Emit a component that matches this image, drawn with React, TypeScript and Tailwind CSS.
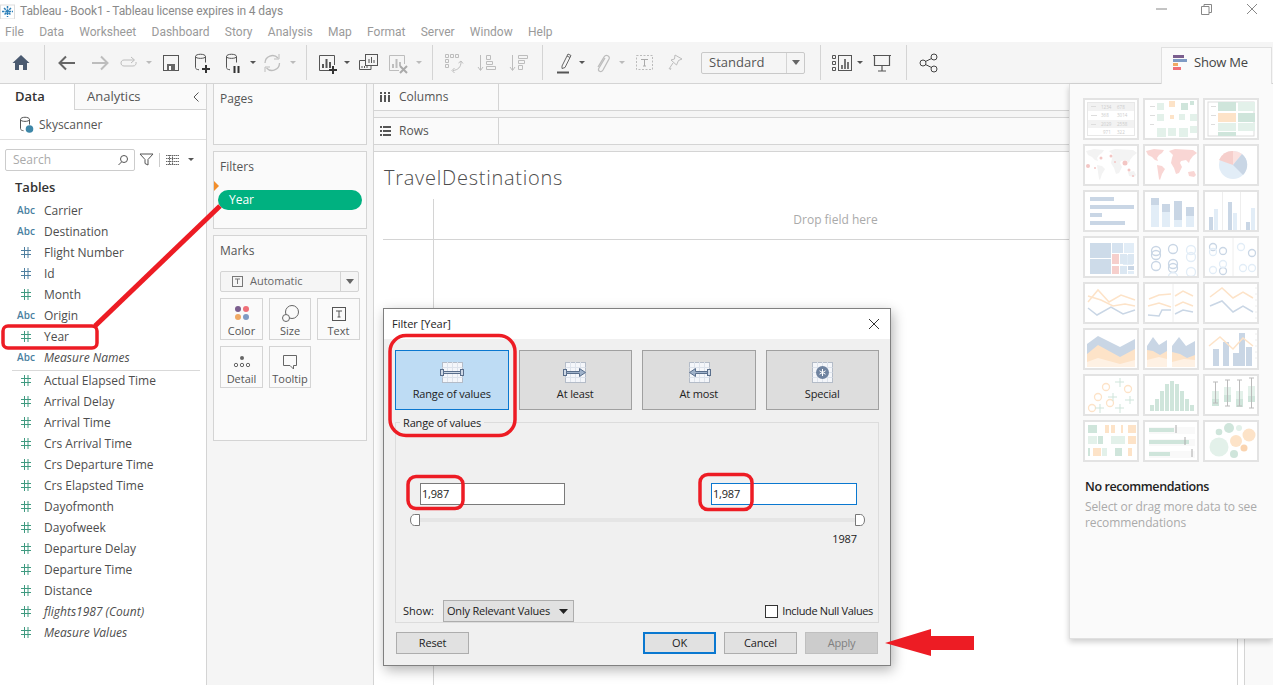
import React from "react";

const dark = "#555";
const off = "#bdbdbd";

function Icon({ children, className = "" }: { children: React.ReactNode; className?: string }) {
  return (
    <svg width="24" height="24" viewBox="0 0 24 24" fill="none" strokeWidth="1" className={"shrink-0 " + className}>
      {children}
    </svg>
  );
}

function Caret({ className = "", light = false }: { className?: string; light?: boolean }) {
  return (
    <svg width="8" height="5" viewBox="0 0 8 5" className={"shrink-0 " + className}>
      <path d="M1 1h6L4 4z" fill={light ? "#bbb" : "#555"} />
    </svg>
  );
}

function Sep({ className = "" }: { className?: string }) {
  return <div className={"h-[35px] w-px shrink-0 bg-[#d4d4d4] " + className} />;
}

function Cylinder({ color = dark }: { color?: string }) {
  return (
    <path d="M5.500 5.500c0-3 10-3 10 0v6M5.500 5.500c0 2.500 10 2.500 10 0M5.500 5.500v11c0 1.500 1.500 2 3.500 2.300" stroke={color} fill="none" />
  );
}

function Toolbar() {
  return (
    <div className="flex h-[41px] shrink-0 items-center bg-[#f5f5f5] border-b border-[#d4d4d4] box-content">
      <Icon className="ml-[9px]">
        <path d="M12 4 L20.500 12 H18 V19 H14 V14 H10 V19 H6 V12 H3.500 Z" fill="#4a5a70" />
      </Icon>
      <Sep className="ml-[11px]" />
      <Icon className="ml-[10px]">
        <path d="M20 12H5M11 5.500 4.500 12l6.500 6.500" stroke="#666" strokeWidth="2" />
      </Icon>
      <Icon className="ml-[9px]">
        <path d="M4 12h15M13 5.500l6.500 6.500-6.500 6.500" stroke={off} strokeWidth="2" />
      </Icon>
      <Icon className="ml-[5px]">
        <path d="M17 9H7c-4 0-4 6 0 6h9c2.500 0 3.500-2 3-4" stroke={off} />
        <path d="M14 6l3.500 3-3.500 3" stroke={off} />
      </Icon>
      <Caret light className="ml-[4px]" />
      <Icon className="ml-[6px]">
        <rect x="4.500" y="4.500" width="15" height="15" stroke={dark} />
        <rect x="8" y="13" width="8" height="6.500" fill="#666" />
        <rect x="10" y="15" width="2" height="4" fill="#fff" />
      </Icon>
      <Icon className="ml-[7px]">
        <Cylinder />
        <path d="M12 18h8M16 14v8" stroke="#333" strokeWidth="2" />
      </Icon>
      <Icon className="ml-[7px]">
        <Cylinder />
        <path d="M13.500 15v7M17.500 15v7" stroke="#333" strokeWidth="2" />
      </Icon>
      <Caret className="ml-[4px]" />
      <Icon className="ml-[3px]">
        <path d="M5 12a7.500 7.500 0 0 1 13-5M19.500 12a7.500 7.500 0 0 1-13 5" stroke={off} strokeWidth="1.300" />
        <path d="M19 3v5h-5M5 21v-5h5" stroke={off} />
      </Icon>
      <Caret light className="ml-[5px]" />
      <Sep className="ml-[9px]" />
      <Icon className="ml-[8px]">
        <path d="M14 19.500H4.500v-15h15V14" stroke={dark} />
        <path d="M8 17v-4M11.500 17V8M15 17v-6" stroke={dark} strokeWidth="2" />
        <path d="M14 19h8M18 15v8" stroke="#333" strokeWidth="2" />
      </Icon>
      <Caret className="ml-[4px]" />
      <Icon className="ml-[5px]">
        <rect x="9.500" y="3.500" width="12" height="11" fill="#f5f5f5" stroke={dark} />
        <path d="M13 12V8M15.500 12V6M18 12V9" stroke={dark} />
        <path d="M9 9.500H3.500v9H15v-4" stroke={dark} />
        <path d="M6 17v-2M8.500 17v-2M11 17v-2" stroke={dark} />
      </Icon>
      <Icon className="ml-[5px]">
        <path d="M14 19.500H4.500v-15h15V13" stroke={off} />
        <path d="M8 17v-4M11.500 17V8M15 15v-4" stroke={off} strokeWidth="2" />
        <path d="M15 15l7 7M22 15l-7 7" stroke="#aaa" strokeWidth="2" />
      </Icon>
      <Caret light className="ml-[6px]" />
      <Sep className="ml-[9px]" />
      <Icon className="ml-[8px]">
        <path d="M4.500 3.500h3v3h-3zM9.500 3.500h3v3h-3zM14.500 3.500h3v3h-3zM4.500 8.500h3v3h-3zM4.500 13.500h3v3h-3z" stroke={off} />
        <path d="M20 11c0 5-3 8-8 8.500M13.500 17l-2.500 2.500 2.500 2.500M17.500 12l2.500-2 2 2.500" stroke={off} />
      </Icon>
      <Icon className="ml-[10px]">
        <path d="M5.500 4v15M3 16l2.500 3.500L8 16" stroke={off} />
        <path d="M11.500 4.500h4v4h-4zM11.500 10.500h6v3h-6zM11.500 15.500h9v3h-9z" stroke={off} />
      </Icon>
      <Icon className="ml-[8px]">
        <path d="M5.500 4v15M3 16l2.500 3.500L8 16" stroke={off} />
        <path d="M11.500 4.500h9v3h-9zM11.500 9.500h6v3h-6zM11.500 14.500h4v4h-4z" stroke={off} />
      </Icon>
      <Sep className="ml-[11px]" />
      <Icon className="ml-[10px]">
        <path d="M9 15 15 3l3 1.500-6 12-3 1zM14 5l3 1.500" stroke="#666" fill="none" />
        <path d="M4 21.500h12" stroke="#555" strokeWidth="2" />
      </Icon>
      <Caret className="ml-px" />
      <Icon className="ml-[4px]">
        <path d="M15 7l-6 10c-2 3 2 5 4 2l6-11c1.500-3-3-5-5-2L8 16" stroke={off} strokeWidth="1.300" />
      </Icon>
      <Caret light className="ml-[4px]" />
      <Icon className="ml-[6px]">
        <rect x="4.500" y="4.500" width="16" height="14" stroke="#bbb" strokeDasharray="2 1.500" />
        <path d="M9 8.500h7M12.500 8.500V15M11 15h3" stroke="#aaa" />
      </Icon>
      <Icon className="ml-[6px]">
        <path d="M13 4l7 4-3.500 1.500-2 4.500-5.500-5 3.500-1zM11 12l-4 6M8 19l1-2" stroke={off} />
      </Icon>
      <div className="ml-[15px] flex h-[22px] w-[104px] shrink-0 items-center rounded-[2px] border border-[#c9c9c9] bg-[#f5f5f5]">
        <span className="flex-1 pl-[7px] text-[13px] text-[#555]">Standard</span>
        <span className="flex h-full w-[18px] items-center justify-center border-l border-[#d4d4d4]">
          <svg width="8" height="5" viewBox="0 0 8 5"><path d="M0 0h8L4 5z" fill="#666" /></svg>
        </span>
      </div>
      <Sep className="ml-[15px]" />
      <Icon className="ml-[9px]">
        <path d="M2.500 4.500h3v3h-3zM2.500 10.500h3v3h-3zM2.500 16.500h3v3h-3z" stroke={dark} />
        <rect x="8.500" y="4.500" width="13" height="15" stroke={dark} />
        <path d="M12 18v-4M15 18V8M18 18v-7" stroke={dark} strokeWidth="1.600" />
      </Icon>
      <Caret className="ml-[2px]" />
      <Icon className="ml-[6px]">
        <path d="M3 4.500h18M4.500 4.500v10h15v-10M12 14.500v5M8 20h8" stroke={dark} strokeWidth="1.200" />
      </Icon>
      <Sep className="ml-[12px]" />
      <Icon className="ml-[10px]">
        <circle cx="6" cy="12" r="3" stroke="#444" />
        <circle cx="17" cy="6" r="3" stroke="#444" />
        <circle cx="17" cy="18" r="3" stroke="#444" />
        <path d="M8.500 10.500 14.500 7.500M8.500 13.500l6 3" stroke="#444" />
      </Icon>
      <div className="relative z-10 mb-[-1px] ml-auto mr-px flex h-[37px] w-[111px] shrink-0 items-center gap-[6px] self-end border border-b-0 border-[#e0e0e0] bg-[#fafafa] pb-[6px] pl-[11px]">
        <svg width="15" height="16" viewBox="0 0 15 16" className="shrink-0">
          <rect x="0" y="0" width="11" height="3" fill="#7b5e8e" />
          <rect x="0" y="4" width="14" height="3" fill="#7f9bc4" />
          <rect x="0" y="8" width="5" height="3" fill="#f0a964" />
          <rect x="0" y="12" width="8" height="3" fill="#ef6f78" />
        </svg>
        <span className="text-[13px] tracking-[-0.2px] text-[#444]">Show Me</span>
      </div>
    </div>
  );
}

function Field({ name, kind, italic = false }: { name: string; kind: "abc" | "blue" | "green"; italic?: boolean }) {
  const color = kind === "blue" ? "#4e7fa0" : "#3f9a80";
  return (
    <div className="flex h-[21px] items-center">
      <div className="flex w-[44px] justify-center pl-[8px]">
        {kind === "abc" ? (
          <span className="text-[10px] font-semibold text-[#4a7f9f]">Abc</span>
        ) : (
          <svg width="12" height="11" viewBox="0 0 12 11" fill="none" stroke={color}>
            <path d="M1 3.500h10M1 7.500h10M4.500 0v11M8 0v11" />
          </svg>
        )}
      </div>
      <span className={"text-[12px] text-[#4d4d4d] " + (italic ? "italic" : "")}>{name}</span>
    </div>
  );
}

function DataPane() {
  return (
    <div className="flex w-[207px] shrink-0 flex-col border-r border-[#d4d4d4] bg-white">
      <div className="flex h-[26px] shrink-0">
        <div className="flex w-[74px] items-center pl-[15px] text-[13px] font-semibold text-[#333]">Data</div>
        <div className="flex flex-1 items-center justify-between border-b border-l border-[#d4d4d4] bg-[#fafafa] pl-[12px] pr-[6px] text-[13px] text-[#555]">
          Analytics
          <svg width="8" height="12" viewBox="0 0 8 12" fill="none" stroke="#555"><path d="M6.500 1.500 2 6l4.500 4.500" /></svg>
        </div>
      </div>
      <div className="flex h-[30px] shrink-0 items-center border-b border-[#e0e0e0] pl-[19px]">
        <svg width="16" height="18" viewBox="0 0 16 18" className="shrink-0">
          <path d="M1.500 3.500c0-3 9-3 9 0v5M1.500 3.500c0 2.500 9 2.500 9 0M1.500 3.500v9c0 1.500 1.500 2 3 2.200" fill="none" stroke="#555" />
          <circle cx="10.500" cy="13" r="3.800" fill="#3e87a8" />
        </svg>
        <span className="ml-[4px] text-[12px] text-[#555]">Skyscanner</span>
      </div>
      <div className="flex h-[21px] mt-[9px] shrink-0 items-center pl-[5px]">
        <div className="flex h-[22px] w-[130px] shrink-0 items-center justify-between rounded-[2px] border border-[#ccc] bg-white pl-[7px] pr-[5px] text-[12px] text-[#aaa]">
          Search
          <svg width="12" height="12" viewBox="0 0 12 12" fill="none" stroke="#555"><circle cx="7" cy="5" r="3.500" /><path d="M4.500 8 1.500 11" /></svg>
        </div>
        <svg width="15" height="13" viewBox="0 0 15 13" fill="none" stroke="#555" className="ml-[4px] shrink-0"><path d="M1 1h13L9 6.500V12L6 10.500v-4z" /></svg>
        <div className="ml-[5px] h-[14px] w-px shrink-0 bg-[#ccc]" />
        <svg width="13" height="10" viewBox="0 0 13 10" fill="none" stroke="#666" className="ml-[6px] shrink-0"><path d="M0 .5h13M0 3.500h13M0 6.500h13M0 9.500h13M3.500 0v10M6.500 0v10" strokeDasharray="1.500 .5" /></svg>
        <Caret className="ml-[8px]" />
      </div>
      <div className="mt-[7px] pl-[15px] text-[13px] font-semibold leading-[20px] text-[#333]">Tables</div>
      <div className="mt-[3px]">
        <Field name="Carrier" kind="abc" />
        <Field name="Destination" kind="abc" />
        <Field name="Flight Number" kind="blue" />
        <Field name="Id" kind="blue" />
        <Field name="Month" kind="green" />
        <Field name="Origin" kind="abc" />
        <Field name="Year" kind="green" />
        <Field name="Measure Names" kind="abc" italic />
      </div>
      <div className="ml-[12px] mr-[6px] mt-[2px] h-px bg-[#d9d9d9]" />
      <div className="-mt-px">
        {["Actual Elapsed Time", "Arrival Delay", "Arrival Time", "Crs Arrival Time", "Crs Departure Time", "Crs Elapsted Time", "Dayofmonth", "Dayofweek", "Departure Delay", "Departure Time", "Distance"].map((n) => (
          <Field key={n} name={n} kind="green" />
        ))}
        <Field name="flights1987 (Count)" kind="green" italic />
        <Field name="Measure Values" kind="green" italic />
      </div>
    </div>
  );
}

function MarkButton({ label, children }: { label: string; children: React.ReactNode }) {
  return (
    <div className="flex h-[42px] flex-col items-center border border-[#d4d4d4] pt-[5px] text-[11px] leading-[14px] text-[#555]">
      <svg width="20" height="20" viewBox="0 0 20 20" fill="none" className="shrink-0">{children}</svg>
      <span>{label}</span>
    </div>
  );
}

function SidePane() {
  return (
    <div className="flex w-[166px] shrink-0 flex-col gap-[6px] px-[6px] bg-[#f5f5f5]">
      <div className="h-[61px] shrink-0 border border-t-0 border-[#d4d4d4] bg-[#fafafa] pl-[6px] pt-[6px] text-[12px] text-[#555]">Pages</div>
      <div className="h-[78px] shrink-0 border border-[#d4d4d4] bg-[#fafafa] pl-[6px] pt-[7px] text-[12px] leading-[16px] text-[#555]">
        Filters
        <div className="relative -ml-[2px] mr-[4px] mt-[15px] flex h-[20px] items-center rounded-full bg-[#00b180] pl-[11px] text-[12px] text-white">
          Year
          <svg width="5" height="10" viewBox="0 0 5 10" className="absolute -left-[4px] -top-[9px]"><path d="M0 0l5 5-5 5z" fill="#f28e2b" /></svg>
        </div>
      </div>
      <div className="h-[206px] shrink-0 border border-[#d4d4d4] bg-[#fafafa] pl-[6px] pt-[7px]">
        <div className="text-[12px] leading-[16px] text-[#555]">Marks</div>
        <div className="mt-[12px] flex h-[21px] w-[139px] items-center rounded-[2px] border border-[#d4d4d4] bg-[#f5f5f5] text-[11px] text-[#666]">
          <svg width="12" height="12" viewBox="0 0 12 12" fill="none" stroke="#777" className="ml-[11px]"><rect x=".5" y=".5" width="10" height="10" /><path d="M3 3h5M5.500 3v5" /></svg>
          <span className="ml-[6px] flex-1">Automatic</span>
          <span className="flex h-full w-[18px] items-center justify-center border-l border-[#d4d4d4]">
            <svg width="8" height="5" viewBox="0 0 8 5"><path d="M0 0h8L4 5z" fill="#666" /></svg>
          </span>
        </div>
        <div className="mt-[6px] grid w-[140px] grid-cols-[43px_42px_43px] gap-x-[6px] gap-y-[6px]">
          <MarkButton label="Color">
            <circle cx="6" cy="5" r="3" fill="#7b5e8e" />
            <circle cx="14" cy="5" r="3" fill="#ef6f78" />
            <circle cx="6" cy="13" r="3" fill="#f0a964" />
            <circle cx="14" cy="13" r="3" fill="#7f9bc4" />
          </MarkButton>
          <MarkButton label="Size">
            <circle cx="12" cy="8" r="6.500" stroke="#666" />
            <circle cx="6" cy="14" r="3.500" stroke="#666" fill="#fafafa" />
          </MarkButton>
          <MarkButton label="Text">
            <rect x="3.500" y="3.500" width="13" height="13" stroke="#555" />
            <path d="M7 7h6M10 7v6M8.500 13h3" stroke="#555" />
          </MarkButton>
          <MarkButton label="Detail">
            <circle cx="10" cy="6" r="2" fill="#666" />
            <circle cx="4" cy="13" r="1.700" stroke="#666" />
            <circle cx="10" cy="13" r="1.700" stroke="#666" />
            <circle cx="16" cy="13" r="1.700" stroke="#666" />
          </MarkButton>
          <MarkButton label="Tooltip">
            <path d="M3.500 3.500h13v10h-3v3.500l-3.500-3.500H3.500z" stroke="#666" />
          </MarkButton>
        </div>
      </div>
    </div>
  );
}

function Shelf({ label, icon, className = "" }: { label: string; icon: React.ReactNode; className?: string }) {
  return (
    <div className={"flex shrink-0 border-b border-l border-[#d4d4d4] bg-[#fafafa] " + className}>
      <div className="flex w-[125px] items-center gap-[8px] border-r border-[#d4d4d4] pl-[6px] text-[12px] text-[#555]">
        {icon}
        {label}
      </div>
    </div>
  );
}

function Viz() {
  return (
    <div className="flex min-w-0 flex-1 flex-col bg-[#f5f5f5]">
      <Shelf
        label="Columns"
        className="h-[27px]"
        icon={
          <svg width="11" height="10" viewBox="0 0 11 10" fill="#555"><rect x="0" y="3" width="2" height="7" /><rect x="4" y="3" width="2" height="7" /><rect x="8" y="3" width="2" height="7" /><rect x="0" y="0" width="2" height="2" /><rect x="4" y="0" width="2" height="2" /><rect x="8" y="0" width="2" height="2" /></svg>
        }
      />
      <div className="h-[6px] shrink-0 border-l border-[#d4d4d4]" />
      <Shelf
        label="Rows"
        className="h-[28px] border-t"
        icon={
          <svg width="11" height="10" viewBox="0 0 11 10" fill="#555"><path d="M0 0h2v2H0zM3 0h8v2H3zM0 4h2v2H0zM3 4h8v2H3zM0 8h2v2H0zM3 8h8v2H3z" /></svg>
        }
      />
      <div className="h-[6px] shrink-0 border-l border-[#d4d4d4]" />
      <div className="flex flex-1 border-l border-t border-[#d4d4d4] bg-white">
        <div className="flex w-[864px] shrink-0 flex-col border-r border-[#d4d4d4] pl-[9px]">
          <div className="h-[47px] shrink-0 pl-[1px] pt-[12px] text-[20px] font-light leading-[27px] tracking-[0.75px] text-[#4d4d4d]">TravelDestinations</div>
          <div className="flex h-[41px] shrink-0 border-b border-[#d4d4d4]">
            <div className="w-[51px] border-r border-[#d4d4d4]" />
            <div className="flex flex-1 items-center justify-center pt-[2px] text-[12px] text-[#aaa]">Drop field here</div>
          </div>
          <div className="flex-1">
            <div className="h-full w-[51px] border-r border-[#d4d4d4]" />
          </div>
        </div>
        <div className="w-[7px] shrink-0 border-r border-[#d4d4d4]" />
        <div className="flex-1 bg-[#f9f9f9]" />
      </div>
    </div>
  );
}

function Thumb({ children }: { children: React.ReactNode }) {
  return (
    <div className="h-[42px] w-[56px] border-2 border-[#e3e3e3] bg-white">
      <svg width="52" height="38" viewBox="0 0 52 38" fill="none" className="block">{children}</svg>
    </div>
  );
}

const B = "#c9d6e5";
const LB = "#e2edf7";
const O = "#fde3c8";
const G = "#cfe5db";
const LG = "#e3f1ea";
const P = "#f6cfcc";
const rects = (list: number[][], fill: string) =>
  list.map((r, i) => <rect key={fill + i} x={r[0]} y={r[1]} width={r[2]} height={r[3]} fill={fill} />);
const rings = (list: number[][], stroke: string) =>
  list.map((c, i) => <circle key={stroke + i} cx={c[0]} cy={c[1]} r={c[2]} stroke={stroke} strokeWidth="1.300" />);
const world = "M1 5l8-2 10 1-2 3-3 2-2 3 1 3-3-1-3-3-4-2zM12 19l5 1 3 3-3 5-2 6-1-1-1-7zM24 5l6-2 18 1 4 3-4 3-3 4-1 3-3-3-5 1-1 2 2 4-3 6-3 1-2-6-3-5 1-5 1-3zM43 26l6-1 2 4-2 2-5-1z";

function ShowMe() {
  return (
    <div className="absolute left-[1069px] top-[84px] h-[555px] w-[204px] border-b border-l border-[#e0e0e0] bg-[#fafafa] pl-[13px] pt-[14px] shadow-[0_3px_6px_rgba(0,0,0,0.2)]">
      <div className="grid grid-cols-[56px_56px_56px] gap-x-[4px] gap-y-[4px]">
        <Thumb>
          {rects([[3, 3, 46, 8], [3, 20, 46, 8]], "#f2f2f2")}
          <rect x="2.500" y="2.500" width="47" height="33" stroke="#e8e8e8" />
          {rects([[6, 6, 5, 1], [6, 15, 6, 1], [6, 24, 5, 1]], "#ddd")}
          {[[16, 9, "1234"], [32, 9, "678"], [16, 17, "368"], [32, 17, "3014"], [16, 26, "2029"], [32, 26, "2558"], [18, 34, "971"], [32, 34, "322"]].map((t, i) => (
            <text key={i} x={t[0] as number} y={t[1] as number} fontSize="4.500" fill="#ccc">{t[2]}</text>
          ))}
        </Thumb>
        <Thumb>
          {rects([[5, 6, 5, 1], [5, 15, 5, 1], [5, 24, 4, 1]], "#ddd")}
          {rects([[12, 3, 7, 7], [12, 14, 7, 7], [34, 14, 6, 6], [12, 28, 9, 9], [34, 28, 9, 9]], LG)}
          {rects([[24, 1, 6, 6], [25, 15, 4, 4]], O)}
          {rects([[36, 3, 7, 7], [45, 1, 4, 4]], G)}
          {rects([[45, 14, 7, 7], [45, 26, 7, 7], [23, 28, 8, 8]], LG)}
        </Thumb>
        <Thumb>
          <rect x="3" y="2" width="46" height="34" stroke="#ddd" />
          {rects([[6, 6, 5, 1], [6, 15, 5, 1], [6, 24, 4, 1]], "#ddd")}
          {rects([[13, 2, 18, 9], [13, 32, 18, 4], [33, 13, 17, 9]], G)}
          {rects([[33, 2, 17, 9], [13, 23, 18, 8], [33, 23, 17, 8]], LG)}
          <rect x="13" y="13" width="18" height="9" fill={O} />
        </Thumb>
        <Thumb>
          <path d={world} fill="#f3f3f3" />
          {[[26, 10, 1.500], [3, 20, 2], [10, 22, 1], [40, 17, 2.500], [44, 24, 1.500], [16, 12, 1.500], [30, 16, 1], [48, 30, 1]].map((c, i) => (
            <circle key={i} cx={c[0]} cy={c[1]} r={c[2]} fill="#f3c6c4" />
          ))}
        </Thumb>
        <Thumb>
          <path d={world} fill="#f9d6d4" />
        </Thumb>
        <Thumb>
          <circle cx="28" cy="19" r="14" fill={LB} />
          <path d="M28 19V5a14 14 0 0 0-14 9z" fill={P} />
          <path d="M28 19V5a14 14 0 0 1 9 3z" fill="#fbe1df" />
          <path d="M28 19l9-11a14 14 0 0 1 1 21z" fill={B} />
        </Thumb>
        <Thumb>
          {rects([[5, 5, 24, 4], [5, 13, 44, 4], [5, 21, 12, 4], [5, 29, 35, 4]], B)}
        </Thumb>
        <Thumb>
          {rects([[6, 6, 8, 7], [17, 12, 8, 8], [29, 9, 8, 19], [41, 15, 8, 9]], B)}
          {rects([[6, 13, 8, 22], [17, 20, 8, 15], [29, 28, 8, 7], [41, 24, 8, 11]], LB)}
        </Thumb>
        <Thumb>
          <path d="M17.500 0v38M35.500 0v38" stroke="#eee" />
          {rects([[4, 25, 4, 13], [23, 10, 4, 28], [41, 30, 4, 8]], B)}
          {rects([[9, 17, 4, 21], [28, 21, 4, 17], [46, 16, 4, 22]], LB)}
        </Thumb>
        <Thumb>
          {rects([[5, 5, 21, 15], [5, 21, 21, 15]], "#cddbe9")}
          {rects([[27, 5, 11, 10]], "#d6e3f0")}
          {rects([[39, 5, 10, 10], [38, 17, 10, 10]], LB)}
          {rects([[27, 16, 7, 10], [27, 28, 7, 8]], P)}
          {rects([[35, 16, 7, 10], [35, 28, 7, 8], [43, 16, 6, 10]], "#dbe7f2")}
          {rects([[43, 28, 6, 4]], B)}
          {rects([[43, 33, 6, 3]], LB)}
        </Thumb>
        <Thumb>
          {rings([[11, 13, 4.500], [11, 17, 4.500], [28, 11, 4.500], [11, 28, 4.500], [28, 26, 4.500], [28, 30, 4.500]], B)}
          {rings([[46, 12, 4.500], [46, 19, 4.500], [46, 34, 4.500], [28, 39, 4.500]], LB)}
        </Thumb>
        <Thumb>
          <path d="M28 0v38" stroke="#eee" />
          {rings([[8, 9, 3.500], [18, 13, 3.500], [18, 33, 3.500], [47, 15, 3.500]], B)}
          {rings([[8, 14, 3.500], [8, 32, 3.500], [18, 26, 3.500], [36, 9, 3.500], [38, 30, 3.500], [47, 30, 3.500]], LB)}
        </Thumb>
        <Thumb>
          <polyline points="3,18 13,6 24,18 36,11 50,16" stroke={O} strokeWidth="1.500" />
          <polyline points="3,12 16,16 28,22 40,20 50,22" stroke={O} strokeWidth="1.500" />
          <polyline points="3,24 12,31 26,23 38,30 50,26" stroke={B} strokeWidth="1.500" />
        </Thumb>
        <Thumb>
          <path d="M28 0v38" stroke="#eee" />
          <polyline points="4,15 14,11 26,10" stroke={O} strokeWidth="1.500" />
          <polyline points="3,22 14,19 26,23" stroke={O} strokeWidth="1.500" />
          <polyline points="3,31 14,32 17,26 26,26" stroke={B} strokeWidth="1.500" />
          <polyline points="30,12 38,7 48,12" stroke={O} strokeWidth="1.500" />
          <polyline points="30,22 38,18 48,22" stroke={O} strokeWidth="1.500" />
          <polyline points="30,30 38,26 48,28" stroke={B} strokeWidth="1.500" />
        </Thumb>
        <Thumb>
          <polyline points="5,13 17,4 28,14 38,8 48,14" stroke={O} strokeWidth="1.500" />
          <polyline points="5,22 17,17 28,28 38,22 48,28" stroke={B} strokeWidth="1.500" />
          <path d="M50 4h2M50 10h2M50 16h2M50 22h2M50 28h2M50 34h2" stroke="#eee" />
        </Thumb>
        <Thumb>
          <path d="M2 14 13 6l22 11 15-8v28H2z" fill={B} />
          <path d="M2 24 13 15l22 12 15-8v18H2z" fill={O} />
          <path d="M2 32 13 28l22 6 15-4v7H2z" fill="#fef1e4" />
        </Thumb>
        <Thumb>
          <path d="M2 16 8 7l6 8 8-5v27H2z" fill={B} />
          <path d="M2 20l6 1 7 4 7-4v16H2z" fill={O} />
          <path d="M2 30l12-3 8 2v8H2z" fill="#fef1e4" />
          <path d="M27 16l7-9 7 9 9-5v26H27z" fill={B} />
          <path d="M27 22l8 2 7 4 8-3v12H27z" fill={O} />
          <path d="M27 32l12-3 11 1v7H27z" fill="#fef1e4" />
        </Thumb>
        <Thumb>
          {rects([[8, 19, 6, 17], [18, 12, 6, 24], [28, 23, 6, 13], [34, 3, 6, 33], [41, 17, 6, 19]], B)}
          <polyline points="4,16 15,7 28,19 38,8 48,16" stroke={O} strokeWidth="1.500" />
          <path d="M50 4h2M50 10h2M50 16h2M50 22h2M50 28h2" stroke="#eee" />
        </Thumb>
        <Thumb>
          {rings([[7, 32, 3.500], [13, 21, 3.500], [21, 11, 3.500], [25, 27, 3.500], [43, 13, 3.500]], O)}
          <path d="M35 2v9M30 6h9M28 17v8M23 21h9M35 28v9M30 32h9M45 20v8M40 24h9M15 28v9M10 32h9" stroke={G} />
        </Thumb>
        <Thumb>
          {rects([[5, 29, 4, 6], [10, 23, 4, 12], [15, 15, 4, 20], [20, 8, 4, 27], [25, 5, 4, 30], [30, 8, 4, 27], [35, 15, 4, 20], [40, 23, 4, 12], [45, 29, 4, 6]], G)}
        </Thumb>
        <Thumb>
          {rects([[7, 15, 7, 8], [19, 11, 7, 8], [31, 15, 7, 8], [43, 10, 7, 10]], LG)}
          {rects([[7, 23, 7, 7], [19, 19, 7, 7], [31, 23, 7, 8], [43, 20, 7, 6]], G)}
          <path d="M10.500 6v21M8 6h5M8 27h5M22.500 4v26M20 4h5M20 30h5M34.500 4v26M32 4h5M32 30h5M46.500 2v30M44 2h5M44 32h5" stroke="#bbb" />
        </Thumb>
        <Thumb>
          {rects([[3, 3, 9, 8], [13, 14, 5, 8], [3, 26, 2, 8], [30, 26, 7, 8]], G)}
          {rects([[3, 14, 9, 8], [26, 14, 14, 8], [17, 26, 5, 8]], LG)}
          {rects([[20, 3, 4, 8], [26, 3, 4, 8], [36, 3, 2, 8], [43, 3, 8, 8], [43, 14, 8, 8], [8, 26, 8, 8], [43, 26, 4, 8]], O)}
        </Thumb>
        <Thumb>
          {rects([[4, 5, 46, 7], [4, 17, 46, 7], [4, 29, 46, 7]], "#f9f9f9")}
          {rects([[4, 6, 25, 4], [4, 18, 40, 4], [4, 30, 21, 4]], G)}
          <path d="M31 3v8M40 15v8M47 27v8" stroke="#aaa" />
        </Thumb>
        <Thumb>
          <circle cx="14" cy="25" r="9.500" fill={LG} />
          <circle cx="14" cy="10" r="3.300" fill={G} />
          <circle cx="24" cy="6" r="5" fill={G} />
          <circle cx="34" cy="6" r="3" fill={LG} />
          <circle cx="31" cy="19" r="6" fill={O} />
          <circle cx="44" cy="13" r="6.500" fill={O} />
          <circle cx="39" cy="26" r="3.500" fill="#fad4b0" />
          <circle cx="29" cy="32" r="4" fill={G} />
        </Thumb>
      </div>
      <div className="ml-[2px] mt-[16px] text-[12.5px] font-semibold leading-[18px] tracking-[-0.4px] text-[#222]">No recommendations</div>
      <div className="ml-[2px] mt-[3px] pr-[10px] text-[12px] leading-[16px] tracking-[-0.1px] text-[#aaa]">Select or drag more data to see recommendations</div>
    </div>
  );
}

function DialogIcon({ children }: { children?: React.ReactNode }) {
  return (
    <svg width="24" height="21" viewBox="0 0 24 21" fill="none" className="shrink-0">
      <rect x="2.500" y=".5" width="20" height="20" fill="#f4f6fa" stroke="#b4bcc8" />
      <path d="M2.500 5.500h20M2.500 10.500h20M2.500 15.500h20M7.500 0v20M12.500 0v20M17.500 0v20" stroke="#dde3ec" />
      {children}
    </svg>
  );
}

function FilterTab({ label, active = false, children }: { label: string; active?: boolean; children: React.ReactNode }) {
  return (
    <div className={"flex h-[60px] flex-col items-center border pt-[11px] text-[11px] leading-[15px] tracking-[-0.15px] text-[#222] " + (active ? "border-[#0a78d0] bg-[#bedcf4]" : "border-[#a0a0a0] bg-[#dddddd]")}>
      {children}
      <span className="mt-[3px]">{label}</span>
    </div>
  );
}

function DialogButton({ label, className = "" }: { label: string; className?: string }) {
  return <div className={"flex h-[22px] w-[73px] items-center justify-center border text-[11px] tracking-[-0.2px] " + className}>{label}</div>;
}

function FilterDialog() {
  return (
    <div className="absolute left-[383px] top-[308px] flex h-[358px] w-[508px] flex-col border border-[#808080] bg-[#f0f0f0] shadow-[2px_4px_12px_rgba(0,0,0,0.3)]">
      <div className="flex h-[30px] shrink-0 items-center justify-between bg-white pl-[8px] pr-[10px] text-[11px] text-[#222]">
        Filter [Year]
        <svg width="12" height="12" viewBox="0 0 12 12" stroke="#333" fill="none"><path d="M1 1l10 10M11 1 1 11" /></svg>
      </div>
      <div className="flex flex-1 flex-col px-[11px] pt-[11px]">
        <div className="grid grid-cols-4 gap-[10px]">
          <FilterTab label="Range of values" active>
            <DialogIcon>
              <rect x=".5" y="7.500" width="3" height="6" fill="#cfd9e6" stroke="#5a6f8c" />
              <rect x="20.500" y="7.500" width="3" height="6" fill="#cfd9e6" stroke="#5a6f8c" />
              <rect x="3.500" y="9.500" width="17" height="2" fill="#cfd9e6" stroke="#5a6f8c" />
            </DialogIcon>
          </FilterTab>
          <FilterTab label="At least">
            <DialogIcon>
              <rect x=".5" y="7.500" width="3" height="6" fill="#cfd9e6" stroke="#5a6f8c" />
              <path d="M3.500 9.500h13v-3l6 4-6 4v-3h-13z" fill="#9fb2ca" stroke="#5a6f8c" />
            </DialogIcon>
          </FilterTab>
          <FilterTab label="At most">
            <DialogIcon>
              <rect x="20.500" y="7.500" width="3" height="6" fill="#cfd9e6" stroke="#5a6f8c" />
              <path d="M20.500 9.500h-12v-3l-6 4 6 4v-3h12z" fill="#9fb2ca" stroke="#5a6f8c" />
            </DialogIcon>
          </FilterTab>
          <FilterTab label="Special">
            <DialogIcon>
              <circle cx="12.500" cy="10.500" r="6.500" fill="#6f83a0" />
              <path d="M12.500 7v7M9.500 8.800l6 3.400M15.500 8.800l-6 3.400" stroke="#fff" />
            </DialogIcon>
          </FilterTab>
        </div>
        <div className="relative mt-[12px] flex h-[201px] shrink-0 flex-col border border-[#dcdcdc] px-[7px]">
          <span className="absolute -top-[8px] left-[4px] bg-[#f0f0f0] px-[3px] text-[11px] leading-[15px] tracking-[-0.15px] text-[#222]">Range of values</span>
          <div className="mt-[60px] flex justify-between pl-[17px] pr-[14px] tracking-[-0.2px]">
            <div className="flex h-[22px] w-[145px] items-center border border-[#7a7a7a] bg-white pl-[1px] text-[11px] text-[#222]">1,987</div>
            <div className="flex h-[22px] w-[146px] items-center border border-[#0a78d0] bg-white pl-[1px] text-[11px] text-[#222]">1,987</div>
          </div>
          <div className="ml-[7px] mr-[6px] mt-[9px] flex h-[12px] items-center">
            <svg width="10" height="12" viewBox="0 0 10 12" className="shrink-0"><path d="M9.500 .5H4.500C2 .5 .5 3 .5 6s1.500 5.500 4 5.500h5z" fill="#fff" stroke="#777" /></svg>
            <div className="h-[4px] flex-1 bg-[#e5e5e5]" />
            <svg width="10" height="12" viewBox="0 0 10 12" className="shrink-0"><path d="M.5 .5h5c2.500 0 4 2.500 4 5.500s-1.500 5.500-4 5.500h-5z" fill="#fff" stroke="#777" /></svg>
          </div>
          <div className="mt-[5px] pr-[14px] text-right text-[11px] leading-[15px] tracking-[-0.1px] text-[#222]">1987</div>
          <div className="mt-auto flex items-center text-[11px] text-[#222]">
            <span className="w-[40px]">Show:</span>
            <div className="flex h-[22px] w-[131px] items-center justify-between border border-[#adadad] bg-[#e1e1e1] pl-[3px] pr-[5px] tracking-[-0.2px]">
              Only Relevant Values
              <svg width="9" height="5" viewBox="0 0 9 5"><path d="M0 0h9L4.500 5z" fill="#222" /></svg>
            </div>
            <div className="ml-auto h-[13px] w-[13px] border border-[#333] bg-white" />
            <span className="ml-[4px] mr-[-2px] tracking-[-0.35px]">Include Null Values</span>
          </div>
        </div>
        <div className="mt-[9px] flex items-center justify-between pl-px pr-px">
          <DialogButton label="Reset" className="border-[#adadad] bg-[#e1e1e1] text-[#222]" />
          <div className="flex gap-[8px]">
            <DialogButton label="OK" className="border-2 border-[#0a78d0] bg-[#e1e1e1] text-[#222]" />
            <DialogButton label="Cancel" className="border-[#adadad] bg-[#e1e1e1] text-[#222]" />
            <DialogButton label="Apply" className="border-[#bfbfbf] bg-[#cccccc] text-[#808080]" />
          </div>
        </div>
      </div>
    </div>
  );
}

function Annotations() {
  return (
    <svg width="1273" height="685" viewBox="0 0 1273 685" fill="none" className="pointer-events-none absolute left-0 top-0">
      <g stroke="#ed1c24" strokeWidth="3.500">
        <rect x="3" y="326" width="94" height="22" rx="5" />
        <path d="M95 326 220 206" strokeWidth="5" />
        <rect x="390" y="335.500" width="125" height="100" rx="16" />
        <rect x="408" y="476.500" width="55" height="32" rx="8" />
        <rect x="700" y="474.500" width="52" height="35" rx="8" />
      </g>
      <path d="M885 643 931 629V636H974V650H931V656Z" fill="#ed1c24" />
    </svg>
  );
}

export default function App() {
  return (
    <div className="relative flex h-[685px] w-[1273px] flex-col overflow-hidden bg-white font-['Open_Sans',sans-serif]">
      <div className="flex h-[21px] shrink-0 items-center">
        <svg width="16" height="16" viewBox="0 0 16 16" fill="none" className="shrink-0">
          <rect x=".5" y="2" width="14" height="14" stroke="#ddd" />
          <path d="M7.500 3v11M2 8.500h11M4 5l7 7M11 5l-7 7" stroke="#2c7fb8" strokeWidth="1.500" strokeDasharray="2.500 .8" />
        </svg>
        <span className="ml-[4px] font-['Roboto',sans-serif] text-[12px] tracking-[-0.12px] text-[#8a8a8a]">Tableau - Book1 - Tableau license expires in 4 days</span>
        <div className="ml-auto mb-[3px] flex items-center pr-[15px]">
          <svg width="11" height="2" viewBox="0 0 11 2"><path d="M0 1h11" stroke="#888" /></svg>
          <svg width="11" height="11" viewBox="0 0 11 11" fill="none" stroke="#888" className="ml-[34px]"><path d="M.5 2.500h7.500v8H.5zM3 2.500v-2h7.500v8H8" /></svg>
          <svg width="12" height="12" viewBox="0 0 12 12" fill="none" stroke="#888" className="ml-[34px]"><path d="M1 1l10 10M11 1 1 11" /></svg>
        </div>
      </div>
      <div className="flex h-[21px] shrink-0 items-center gap-[15.3px] pl-[5px] font-['Roboto',sans-serif] text-[12px] text-[#9a9a9a]">
        {["File", "Data", "Worksheet", "Dashboard", "Story", "Analysis", "Map", "Format", "Server", "Window", "Help"].map((m) => (
          <span key={m}>{m}</span>
        ))}
      </div>
      <Toolbar />
      <div className="flex min-h-0 flex-1">
        <DataPane />
        <SidePane />
        <Viz />
      </div>
      <ShowMe />
      <FilterDialog />
      <Annotations />
    </div>
  );
}
